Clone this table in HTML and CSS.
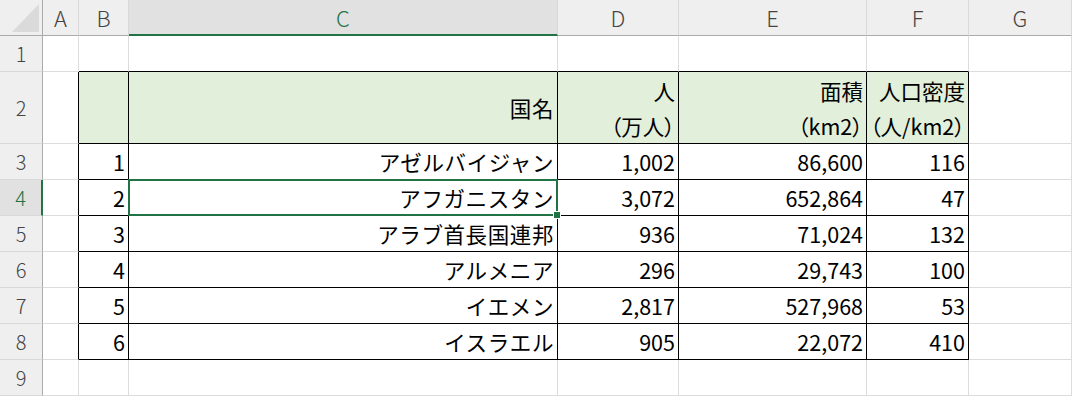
FILE: index.html
```html
<!DOCTYPE html>
<html lang="ja">
<head>
<meta charset="utf-8">
<title>Sheet</title>
<link rel="stylesheet" href="styles.css">
</head>
<body>
<div class="sheet">
  <!-- column header row -->
  <div class="corner"><svg width="42" height="35" viewBox="0 0 42 35"><polygon points="12,32 39,32 39,4" fill="#dadada"/></svg></div>
  <div class="ch">A</div>
  <div class="ch">B</div>
  <div class="ch sel">C</div>
  <div class="ch">D</div>
  <div class="ch">E</div>
  <div class="ch">F</div>
  <div class="ch">G</div>

  <!-- row 1 -->
  <div class="rh">1</div>
  <div class="c"></div>
  <div class="c tt"></div>
  <div class="c tt"></div>
  <div class="c tt"></div>
  <div class="c tt"></div>
  <div class="c tt"></div>
  <div class="c"></div>

  <!-- row 2 -->
  <div class="rh">2</div>
  <div class="c tl"></div>
  <div class="c t hd"></div>
  <div class="c t hd jp">国名</div>
  <div class="c t hd multi"><span>人</span><span>（万人）</span></div>
  <div class="c t hd multi"><span>面積</span><span>（km2）</span></div>
  <div class="c t hd multi"><span>人口密度</span><span>（人/km2）</span></div>
  <div class="c"></div>

  <!-- row 3 -->
  <div class="rh">3</div>
  <div class="c tl"></div>
  <div class="c t">1</div>
  <div class="c t jp">アゼルバイジャン</div>
  <div class="c t">1,002</div>
  <div class="c t">86,600</div>
  <div class="c t">116</div>
  <div class="c"></div>

  <!-- row 4 -->
  <div class="rh sel">4</div>
  <div class="c tl"></div>
  <div class="c t">2</div>
  <div class="c t jp active">アフガニスタン<span class="cursor"><span class="handle"></span></span></div>
  <div class="c t">3,072</div>
  <div class="c t">652,864</div>
  <div class="c t">47</div>
  <div class="c"></div>

  <!-- row 5 -->
  <div class="rh">5</div>
  <div class="c tl"></div>
  <div class="c t">3</div>
  <div class="c t jp">アラブ首長国連邦</div>
  <div class="c t">936</div>
  <div class="c t">71,024</div>
  <div class="c t">132</div>
  <div class="c"></div>

  <!-- row 6 -->
  <div class="rh">6</div>
  <div class="c tl"></div>
  <div class="c t">4</div>
  <div class="c t jp">アルメニア</div>
  <div class="c t">296</div>
  <div class="c t">29,743</div>
  <div class="c t">100</div>
  <div class="c"></div>

  <!-- row 7 -->
  <div class="rh">7</div>
  <div class="c tl"></div>
  <div class="c t">5</div>
  <div class="c t jp">イエメン</div>
  <div class="c t">2,817</div>
  <div class="c t">527,968</div>
  <div class="c t">53</div>
  <div class="c"></div>

  <!-- row 8 -->
  <div class="rh">8</div>
  <div class="c tl"></div>
  <div class="c t">6</div>
  <div class="c t jp">イスラエル</div>
  <div class="c t">905</div>
  <div class="c t">22,072</div>
  <div class="c t">410</div>
  <div class="c"></div>

  <!-- row 9 -->
  <div class="rh">9</div>
  <div class="c"></div>
  <div class="c"></div>
  <div class="c"></div>
  <div class="c"></div>
  <div class="c"></div>
  <div class="c"></div>
  <div class="c"></div>
</div>
</body>
</html>
```

FILE: styles.css
```css
* { box-sizing: border-box; }
html, body { margin: 0; padding: 0; background: #fff; overflow: hidden; }
body { width: 1072px; height: 396px; }

.sheet {
  display: grid;
  grid-template-columns: 43px 36px 50px 429px 121px 188px 102px 103px;
  grid-template-rows: 36px 36px 72px repeat(7, 36px);
  font-family: "Noto Sans CJK JP", "Noto Sans", sans-serif;
  color: #000;
}

.corner {
  background: #efefef;
  border-right: 1px solid #ababab;
  border-bottom: 1px solid #ababab;
  line-height: 0;
}
.corner svg { display: block; }

.ch {
  background: #efefef;
  border-right: 1px solid #d9d9d9;
  border-bottom: 1px solid #ababab;
  display: flex;
  align-items: center;
  justify-content: center;
  font-size: 22px;
  font-weight: 300;
  color: #444;
  padding-bottom: 1px;
}
.ch.sel {
  background: #e1e1e1;
  color: #217346;
  border-bottom: 2px solid #217346;
  padding-bottom: 0;
}

.rh {
  background: #efefef;
  border-right: 1px solid #ababab;
  border-bottom: 1px solid #d9d9d9;
  display: flex;
  align-items: center;
  justify-content: center;
  font-size: 20px;
  font-weight: 300;
  color: #444;
}
.rh.sel {
  background: #e1e1e1;
  color: #217346;
  border-right: 2px solid #217346;
}

.c {
  border-right: 1px solid #dcdcdc;
  border-bottom: 1px solid #dcdcdc;
  display: flex;
  align-items: center;
  justify-content: flex-end;
  padding-right: 3px;
  font-size: 21.5px;
  white-space: nowrap;
  position: relative;
}
.c.t { border-right-color: #000; border-bottom-color: #000; }
.c.tl { border-right-color: #000; }
.c.tt { border-bottom-color: #000; }
.c.hd { background: #e2efda; }
.c.jp { letter-spacing: 0.6px; padding-right: 3px; }

.c.multi {
  flex-direction: column;
  align-items: flex-end;
  justify-content: center;
  line-height: 35px;
  font-feature-settings: "palt";
}

.cursor {
  position: absolute;
  left: -1px;
  top: -1px;
  right: -1px;
  bottom: -1px;
  border: 2px solid #217346;
  z-index: 2;
}
.handle {
  position: absolute;
  right: -5px;
  bottom: -5px;
  width: 8px;
  height: 8px;
  background: #217346;
  border: 1px solid #fff;
}
```
